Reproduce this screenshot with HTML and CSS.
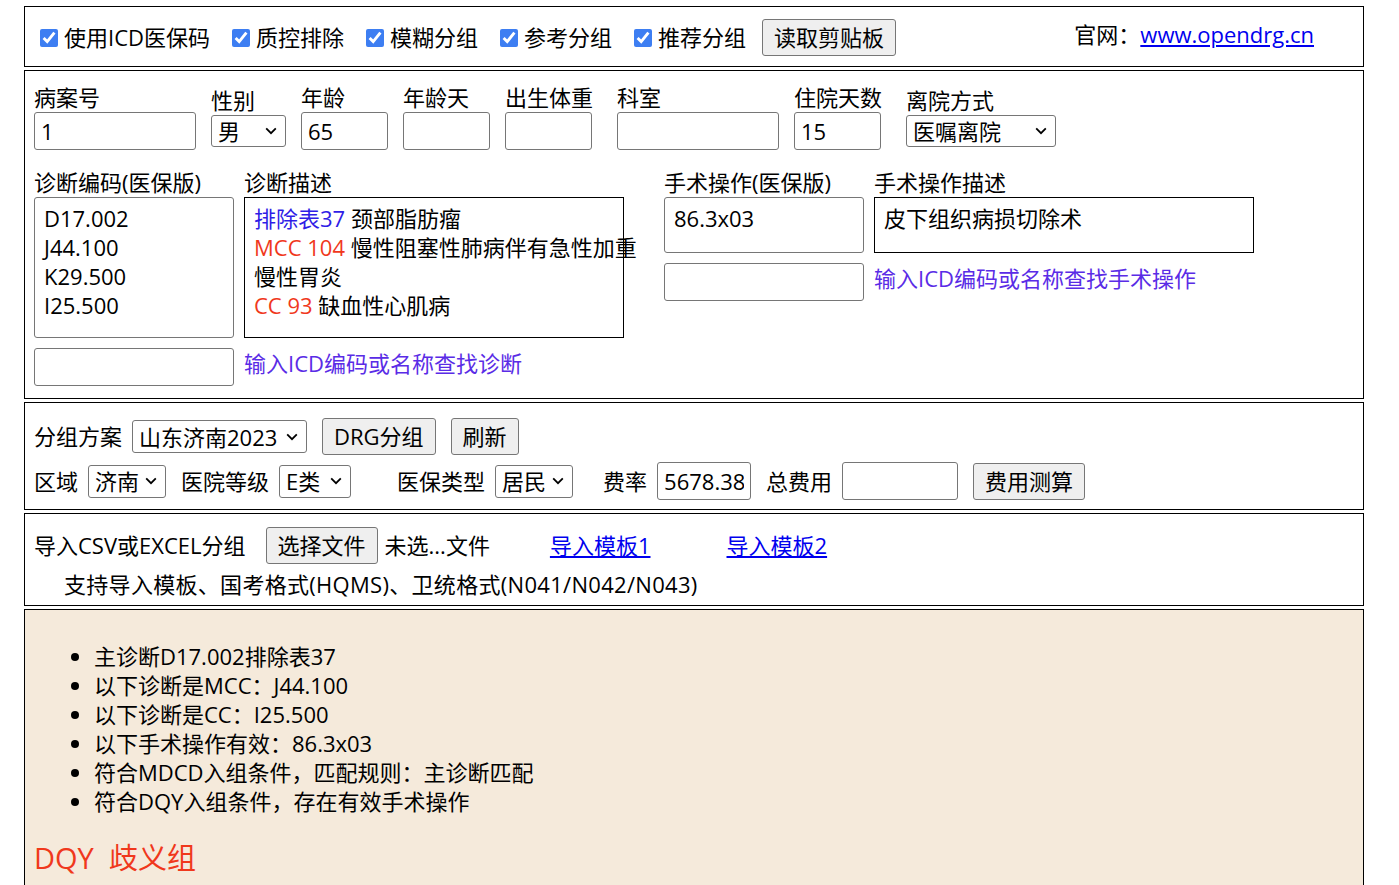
FILE: index.html
```html
<!DOCTYPE html>
<html lang="zh-CN">
<head>
  <meta charset="UTF-8">
  <title>DRG分组</title>
  <link rel="stylesheet" href="styles.css">
</head>
<body>
<div class="page">

  <!-- 选项 -->
  <div class="panel top-bar">
    <label class="check"><input type="checkbox" checked>使用ICD医保码</label>
    <label class="check"><input type="checkbox" checked>质控排除</label>
    <label class="check"><input type="checkbox" checked>模糊分组</label>
    <label class="check"><input type="checkbox" checked>参考分组</label>
    <label class="check"><input type="checkbox" checked>推荐分组</label>
    <button class="btn">读取剪贴板</button>
    <div class="site">官网：<a href="#">www.opendrg.cn</a></div>
  </div>

  <!-- 病案信息 -->
  <div class="panel case">
    <div class="case-row">
      <div class="field"><label>病案号</label><input type="text" class="in-long" value="1"></div>
      <div class="field field-select"><label>性别</label>
        <select class="sel-sex"><option>男</option><option>女</option></select></div>
      <div class="field"><label>年龄</label><input type="text" class="in-short" value="65"></div>
      <div class="field"><label>年龄天</label><input type="text" class="in-short"></div>
      <div class="field field-wide"><label>出生体重</label><input type="text" class="in-short"></div>
      <div class="field"><label>科室</label><input type="text" class="in-long"></div>
      <div class="field field-wide"><label>住院天数</label><input type="text" class="in-short" value="15"></div>
      <div class="field field-select"><label>离院方式</label>
        <select class="sel-leave"><option>医嘱离院</option><option>医嘱转院</option></select></div>
    </div>

    <div class="code-row">
      <div class="code-group">
        <label>诊断编码(医保版)</label>
        <label>诊断描述</label>
        <textarea class="code-box diag-box">D17.002
J44.100
K29.500
I25.500</textarea>
        <div class="desc-box diag-box">
          <div><span class="tag-blue">排除表37</span> 颈部脂肪瘤</div>
          <div><span class="tag-red">MCC 104</span> 慢性阻塞性肺病伴有急性加重</div>
          <div>慢性胃炎</div>
          <div><span class="tag-red">CC 93</span> 缺血性心肌病</div>
        </div>
        <input type="text" class="in-search">
        <span class="hint">输入ICD编码或名称查找诊断</span>
      </div>

      <div class="code-group">
        <label>手术操作(医保版)</label>
        <label>手术操作描述</label>
        <textarea class="code-box oper-box">86.3x03</textarea>
        <div class="desc-box oper-box">
          <div>皮下组织病损切除术</div>
        </div>
        <input type="text" class="in-search">
        <span class="hint">输入ICD编码或名称查找手术操作</span>
      </div>
    </div>
  </div>

  <!-- 分组方案 -->
  <div class="panel scheme">
    <div class="ctl-row">
      <span>分组方案</span>
      <select class="sel-scheme"><option>山东济南2023</option></select>
      <button class="btn btn-gap">DRG分组</button>
      <button class="btn btn-gap">刷新</button>
    </div>
    <div class="ctl-row">
      <span>区域</span>
      <select class="sel-area"><option>济南</option></select>
      <span class="ctl-label">医院等级</span>
      <select class="sel-level"><option>E类</option></select>
      <span class="ctl-label gap-lg">医保类型</span>
      <select class="sel-area"><option>居民</option><option>职工</option></select>
      <span class="ctl-label gap-md">费率</span>
      <input type="text" class="in-rate" value="5678.38">
      <span class="ctl-label">总费用</span>
      <input type="text" class="in-total">
      <button class="btn btn-gap">费用测算</button>
    </div>
  </div>

  <!-- 导入 -->
  <div class="panel import">
    <div class="import-row">
      <span>导入CSV或EXCEL分组</span>
      <button class="btn file-btn">选择文件</button>
      <span class="file-name">未选...文件</span>
      <a href="#" class="tpl-link">导入模板1</a>
      <a href="#" class="tpl-link tpl-link-2">导入模板2</a>
    </div>
    <div class="import-note">支持导入模板、国考格式(HQMS)、卫统格式(N041/N042/N043)</div>
  </div>

  <!-- 结果 -->
  <div class="panel result">
    <ul>
      <li>主诊断D17.002排除表37</li>
      <li>以下诊断是MCC：J44.100</li>
      <li>以下诊断是CC：I25.500</li>
      <li>以下手术操作有效：86.3x03</li>
      <li>符合MDCD入组条件，匹配规则：主诊断匹配</li>
      <li>符合DQY入组条件，存在有效手术操作</li>
    </ul>
    <div class="drg-name">DQY&nbsp; 歧义组</div>
  </div>

</div>
</body>
</html>
```

FILE: styles.css
```css
body {
  margin: 0;
  font-family: "Open Sans", "Noto Sans CJK SC", sans-serif;
  font-size: 22px;
  line-height: 29px;
  color: #000;
}

.page {
  padding: 6px 0 0 24px;
}

.panel {
  width: 1340px;
  box-sizing: border-box;
  border: 1px solid #000;
  margin-bottom: 3px;
  padding: 0 9px;
}

a {
  color: #0000ee;
}

input[type="text"],
textarea,
select,
button {
  font-family: inherit;
  font-size: 22px;
  color: #000;
  box-sizing: border-box;
  margin: 0;
}

input[type="text"] {
  height: 38px;
  padding: 0 6px;
  border: 1px solid #767676;
  border-radius: 3px;
  background: #fff;
  line-height: 29px;
}

select {
  appearance: none;
  -webkit-appearance: none;
  height: 33px;
  padding: 0 26px 0 6px;
  border: 1px solid #767676;
  border-radius: 3px;
  background: #fff url("data:image/svg+xml,%3Csvg xmlns='http://www.w3.org/2000/svg' width='12' height='8' viewBox='0 0 12 8'%3E%3Cpath d='M1.2 1.4 6 6.2l4.8-4.8' fill='none' stroke='%23000' stroke-width='1.8'/%3E%3C/svg%3E") no-repeat right 8px center;
}

.btn {
  height: 37px;
  padding: 0 11px;
  background: #efefef;
  border: 1px solid #767676;
  border-radius: 3px;
  line-height: 29px;
}

/* 顶部选项 */
.top-bar {
  display: flex;
  align-items: center;
  padding-top: 12px;
  padding-bottom: 10px;
}

.check {
  display: flex;
  align-items: center;
  margin-right: 16px;
}

.check input {
  width: 18px;
  height: 18px;
  margin: 0 6px;
  accent-color: #3d7ef2;
}

.site {
  margin-left: auto;
  margin-right: 40px;
  margin-bottom: 6px;
}

/* 病案信息 */
.case {
  padding-top: 12px;
  padding-bottom: 12px;
}

.case-row {
  display: flex;
  align-items: flex-end;
}

.field {
  display: flex;
  flex-direction: column;
  margin-right: 15px;
}

.field-select {
  padding-bottom: 3px;
}

.field-wide {
  margin-right: 24px;
}

.in-long { width: 162px; }
.in-short { width: 87px; }

.sel-sex { width: 75px; height: 32px; }
.sel-leave { width: 150px; height: 32px; }

.code-row {
  display: flex;
  gap: 40px;
  margin-top: 18px;
  align-items: flex-start;
}

.code-group {
  display: grid;
  grid-template-columns: 200px 380px;
  column-gap: 10px;
  align-items: center;
}

.code-box {
  width: 200px;
  padding: 6px 9px;
  border: 1px solid #767676;
  border-radius: 3px;
  line-height: 29px;
  resize: none;
  overflow: hidden;
}

.desc-box {
  box-sizing: border-box;
  border: 1px solid #000;
  padding: 6px 9px;
  white-space: nowrap;
}

.diag-box { height: 141px; }
.oper-box { height: 56px; }

.in-search {
  width: 200px;
  margin-top: 10px !important;
}

.hint {
  margin-top: 2px;
  color: #5a2ce6;
}

.tag-blue { color: #2f1de6; }
.tag-red { color: #f0381c; }

/* 分组方案 */
.scheme {
  padding-top: 15px;
  padding-bottom: 9px;
}

.ctl-row {
  display: flex;
  align-items: center;
  gap: 10px;
}

.ctl-row + .ctl-row {
  margin-top: 7px;
}

.ctl-label { margin-left: 5px; }
.gap-md { margin-left: 20px; }
.gap-lg { margin-left: 36px; }
.btn-gap { margin-left: 5px; }

.sel-scheme { width: 175px; }
.sel-area { width: 78px; }
.sel-level { width: 72px; }

.in-rate { width: 94px; }
.in-total { width: 116px; }

/* 导入 */
.import {
  padding-top: 13px;
  padding-bottom: 6px;
}

.import-row {
  display: flex;
  align-items: center;
}

.file-btn { margin-left: 20px; }
.file-name { margin-left: 7px; }
.tpl-link { margin-left: 60px; }
.tpl-link-2 { margin-left: 76px; }

.import-note {
  margin-top: 6px;
  padding-left: 30px;
  letter-spacing: 0.3px;
}

/* 结果 */
.result {
  background: #f5eadb;
  padding-top: 10px;
  padding-bottom: 20px;
}

.result ul {
  margin: 22px 0;
  padding-left: 60px;
}

.drg-name {
  margin-top: 5px;
  font-size: 29px;
  line-height: 40px;
  color: #f0381c;
}
```
